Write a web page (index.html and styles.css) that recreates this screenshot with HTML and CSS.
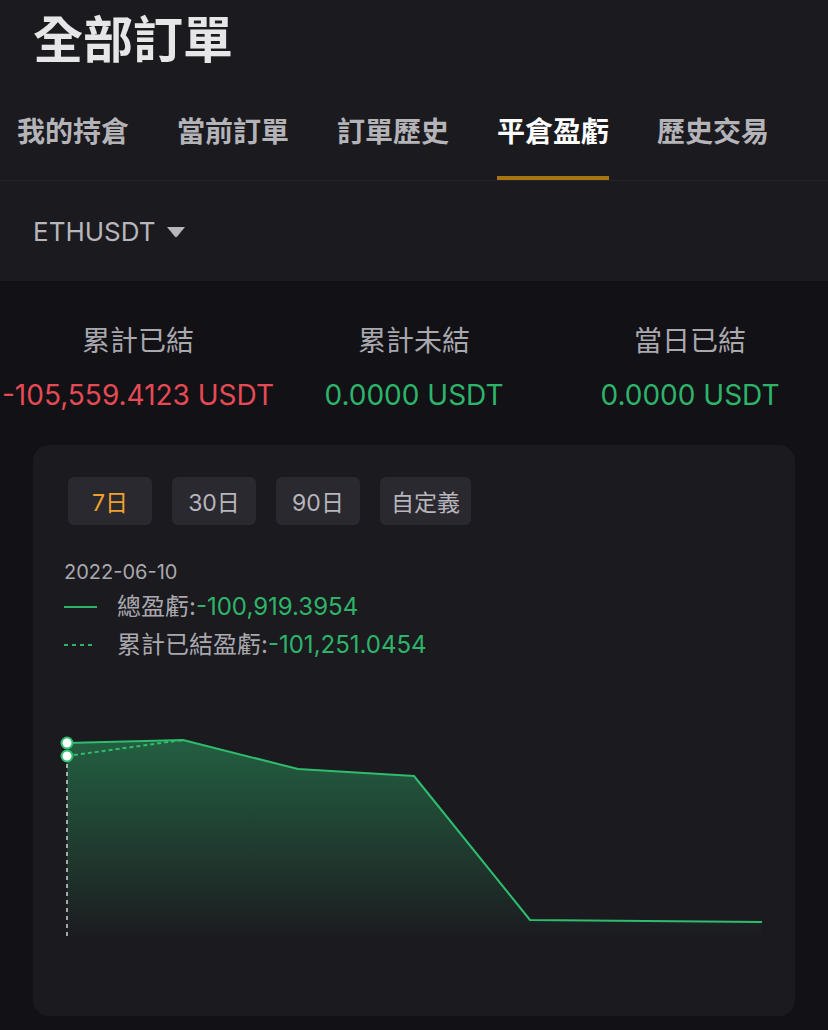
FILE: index.html
```html
<!DOCTYPE html>
<html lang="zh-Hant">
<head>
    <meta charset="UTF-8">
    <meta name="viewport" content="width=device-width, initial-scale=1.0">
    <title>全部訂單</title>
    <link rel="stylesheet" href="styles.css">
</head>
<body>
    <div class="top">
        <h1 class="title">全部訂單</h1>

        <div class="tabs">
            <div class="tab">我的持倉</div>
            <div class="tab">當前訂單</div>
            <div class="tab">訂單歷史</div>
            <div class="tab active">平倉盈虧</div>
            <div class="tab">歷史交易</div>
        </div>

        <div class="symbol">
            <span>ETHUSDT</span>
            <svg class="caret" width="20" height="12" viewBox="0 0 20 12">
                <path d="M1 1 H19 L11.2 10.6 Q10 12 8.8 10.6 Z" fill="#b7b6bc"/>
            </svg>
        </div>
    </div>

    <div class="stats">
        <div class="stat">
            <div class="label">累計已結</div>
            <div class="value red">-105,559.4123 USDT</div>
        </div>
        <div class="stat">
            <div class="label">累計未結</div>
            <div class="value green">0.0000 USDT</div>
        </div>
        <div class="stat">
            <div class="label">當日已結</div>
            <div class="value green">0.0000 USDT</div>
        </div>
    </div>

    <div class="card">
        <div class="ranges">
            <button class="range active">7日</button>
            <button class="range">30日</button>
            <button class="range">90日</button>
            <button class="range">自定義</button>
        </div>

        <div class="legend">
            <div class="date">2022-06-10</div>
            <div class="row">
                <span class="mark solid"></span>
                <span class="name">總盈虧:</span><span class="green">-100,919.3954</span>
            </div>
            <div class="row">
                <span class="mark dashed"></span>
                <span class="name">累計已結盈虧:</span><span class="green">-101,251.0454</span>
            </div>
        </div>

        <div class="chart">
            <svg width="762" height="352" viewBox="33 664 762 352">
                <defs>
                    <linearGradient id="fill" x1="0" y1="740" x2="0" y2="940" gradientUnits="userSpaceOnUse">
                        <stop offset="0" stop-color="#2ebd6e" stop-opacity="0.42"/>
                        <stop offset="0.6" stop-color="#2ebd6e" stop-opacity="0.18"/>
                        <stop offset="1" stop-color="#2ebd6e" stop-opacity="0"/>
                    </linearGradient>
                </defs>
                <!-- area under total line -->
                <path d="M67 743 L183 740 L298 769 L414 776 L530 920 L646 921 L762 922 L762 940 L67 940 Z" fill="url(#fill)"/>
                <line x1="67" y1="756" x2="67" y2="938" stroke="#d4d4d8" stroke-width="1.5" stroke-dasharray="4 4"/>
                <polyline points="67,756 183,740" fill="none" stroke="#2ebd6e" stroke-width="2" stroke-dasharray="4 3"/>
                <polyline points="67,743 183,740 298,769 414,776 530,920 646,921 762,922" fill="none" stroke="#2ebd6e" stroke-width="2" stroke-linejoin="round"/>
                <circle cx="67" cy="743" r="5.5" fill="#ffffff" stroke="#2ebd6e" stroke-width="2"/>
                <circle cx="67" cy="756" r="5.5" fill="#ffffff" stroke="#2ebd6e" stroke-width="2"/>
            </svg>
        </div>
    </div>
</body>
</html>
```

FILE: styles.css
```css
body {
    margin: 0;
    padding: 0;
    background: #121116;
    font-family: Inter, Roboto, "Noto Sans CJK TC", sans-serif;
    color: #b7b6bc;
}

.top {
    background: #1b1a1f;
}

.title {
    margin: 0;
    height: 80px;
    line-height: 80px;
    padding-left: 33px;
    font-size: 50px;
    font-weight: 700;
    color: #e6e6e8;
}

.tabs {
    display: flex;
    gap: 48px;
    padding-left: 17px;
    border-bottom: 1px solid #26252b;
}

.tab {
    height: 100px;
    display: flex;
    align-items: center;
    font-size: 28px;
    font-weight: 700;
    color: #b4b3b8;
}

.tab.active {
    color: #ffffff;
    box-shadow: inset 0 -4px 0 #a87412;
}

.symbol {
    height: 100px;
    display: flex;
    align-items: center;
    gap: 10px;
    padding-left: 33px;
    font-size: 26px;
}

.caret {
    margin-top: 2px;
}

.stats {
    display: grid;
    grid-template-columns: repeat(3, 1fr);
    padding-top: 40px;
    text-align: center;
    white-space: nowrap;
}

.label {
    line-height: 40px;
    font-size: 28px;
    color: #a9a8ae;
}

.value {
    margin-top: 14px;
    line-height: 40px;
    font-size: 28px;
}

.red {
    color: #e54a55;
}

.green {
    color: #2db46a;
}

.card {
    margin: 30px 33px 0;
    background: #1b1a1f;
    border-radius: 16px;
    padding-top: 32px;
    overflow: hidden;
}

.ranges {
    display: flex;
    gap: 20px;
    padding-left: 35px;
}

.range {
    min-width: 84px;
    height: 48px;
    padding: 0 11px;
    border: 0;
    border-radius: 6px;
    background: #2a292f;
    color: #b7b6bc;
    font-family: inherit;
    font-size: 23px;
}

.range.active {
    color: #f0a02c;
}

.legend {
    margin-top: 31px;
    padding-left: 31px;
    font-size: 24px;
}

.date {
    line-height: 32px;
    font-size: 20px;
    color: #a9a8ae;
}

.row {
    display: flex;
    align-items: center;
    line-height: 38px;
}

.mark {
    width: 33px;
    margin-right: 20px;
    height: 2px;
}

.mark.solid {
    background: #2db46a;
}

.mark.dashed {
    width: 29px;
    margin-right: 24px;
    background: repeating-linear-gradient(90deg, #2db46a 0 4px, transparent 4px 8px);
}

.name {
    color: #a9a8ae;
}

.chart svg {
    display: block;
}
```
